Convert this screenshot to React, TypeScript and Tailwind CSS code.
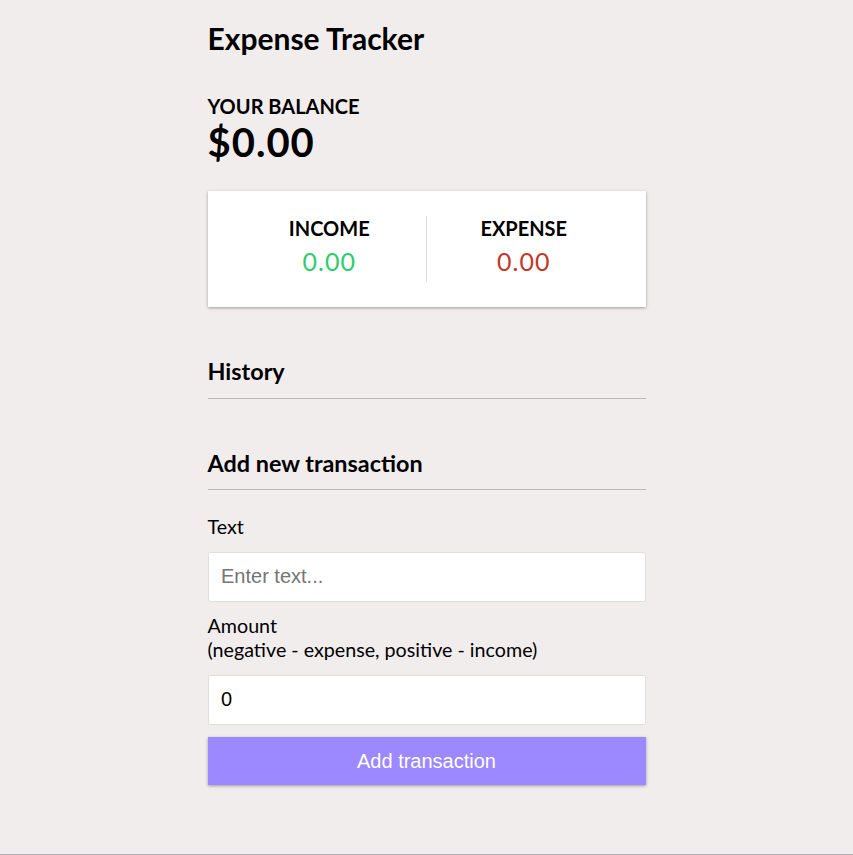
import React from "react";

export default function App() {
  return (
    <div
      className="h-[855px] overflow-hidden bg-[#f2eded] border-b border-[#b5aeb6] text-black"
      style={{ fontFamily: "Lato, 'Noto Sans', sans-serif" }}
    >
      <div className="w-[438px] mx-auto pt-[20px]">
        <h2 className="text-[30px] leading-[36px] font-bold m-0">Expense Tracker</h2>
        <h4 className="mt-[37.6px] text-[20px] leading-[24px] font-bold uppercase">Your Balance</h4>
        <h1 className="text-[40px] leading-[48px] font-bold tracking-[1px]">$0.00</h1>

        <div className="mt-[25px] bg-white p-[25px] flex shadow-[0_1px_4px_rgba(0,0,0,0.12),0_1px_2.5px_rgba(0,0,0,0.24)]">
          <div className="flex-1 text-center border-r border-[#dedede]">
            <h4 className="text-[20px] leading-[24px] font-bold uppercase">Income</h4>
            <p className="text-[25px] leading-[30px] tracking-[1px] my-[6.25px] text-[#2ecc71]">0.00</p>
          </div>
          <div className="flex-1 text-center">
            <h4 className="text-[20px] leading-[24px] font-bold uppercase">Expense</h4>
            <p className="text-[25px] leading-[30px] tracking-[1px] my-[6.25px] text-[#c0392b]">0.00</p>
          </div>
        </div>

        <h3 className="mt-[50px] text-[23.4px] leading-[28px] font-bold border-b border-[#bbbbbb] pb-[12.5px]">History</h3>

        <h3 className="mt-[50px] text-[23.4px] leading-[28px] font-bold border-b border-[#bbbbbb] pb-[12.5px]">Add new transaction</h3>

        <form className="pt-[12.5px]" onSubmit={(e) => e.preventDefault()}>
          <div>
            <label className="inline-block my-[12.5px] text-[19.7px] leading-[24px]">Text</label>
            <input
              type="text"
              placeholder="Enter text..."
              className="block w-full bg-white border border-[#dedede] rounded-[2.5px] text-[20px] leading-[23px] p-[12.5px] placeholder:text-[#757575] outline-none"
              style={{ fontFamily: "'Liberation Sans', Arial, sans-serif" }}
            />
          </div>
          <div>
            <label className="inline-block my-[12.5px] text-[19.7px] leading-[24px]">
              Amount <br />
              (negative - expense, positive - income)
            </label>
            <input
              type="number"
              defaultValue={0}
              className="block w-full bg-white border border-[#dedede] rounded-[2.5px] text-[20px] leading-[23px] p-[12.5px] outline-none text-black"
              style={{ fontFamily: "'Liberation Sans', Arial, sans-serif" }}
            />
          </div>
          <button
            className="block w-full mt-[12.5px] bg-[#9c88ff] text-white text-[20px] leading-[23px] p-[12.5px] shadow-[0_1px_4px_rgba(0,0,0,0.12),0_1px_2.5px_rgba(0,0,0,0.24)]"
            style={{ fontFamily: "'Liberation Sans', Arial, sans-serif" }}
          >
            Add transaction
          </button>
        </form>
      </div>
    </div>
  );
}
